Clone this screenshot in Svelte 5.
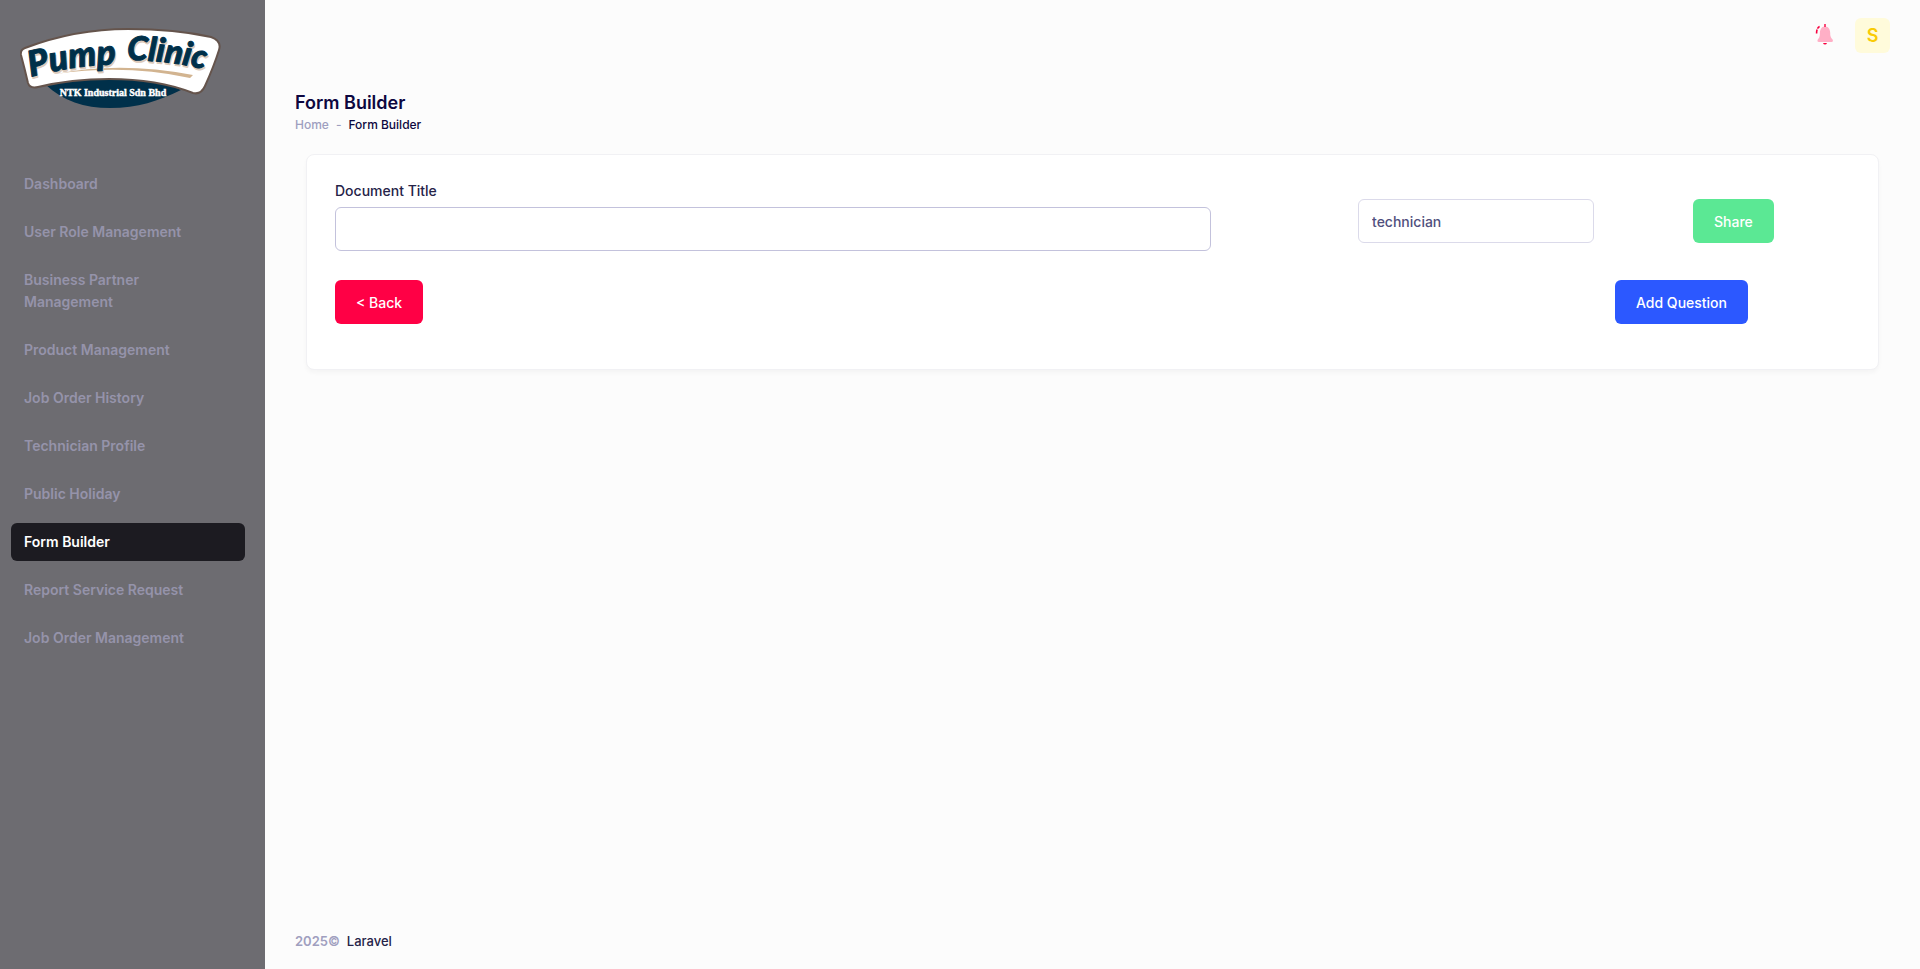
<script>
  let documentTitle = $state('');
  let role = $state('technician');

  const menu = [
    'Dashboard',
    'User Role Management',
    'Business Partner Management',
    'Product Management',
    'Job Order History',
    'Technician Profile',
    'Public Holiday',
    'Form Builder',
    'Report Service Request',
    'Job Order Management'
  ];
  const active = 'Form Builder';
</script>

<div class="app">
  <aside class="sidebar">
    <a class="logo" href="/" aria-label="Pump Clinic">
      <svg width="201" height="82" viewBox="20 27 201 82">
        <defs>
          <path id="word-one" d="M31 77 Q73 65 124 64" />
          <path id="word-two" d="M127 60 Q168 60 212 71" />
        </defs>
        <path d="M46 85 C63 101 84 108 110 108 C138 108 158 101 181 90 L150 77 L80 77 Z" fill="#00304a" />
        <path
          d="M25 48 Q75 29 128 29 Q175 29 211 37 Q222 41 219 50 Q214 66 205 86 Q201 95 193 93 C165 82 137 79 109 79 C82 79 59 82 38 87 Q30 89 28 83 Q25 70 21 55 Q20 50 25 48 Z"
          fill="#fff" stroke="#65544c" stroke-width="2" />
        <path d="M56 74 Q120 61 193 75 L190 78 Q125 64 56 74 Z" fill="#d2b490" />
        <g class="script shade">
          <text transform="translate(1 2)"><textPath href="#word-one">Pump</textPath></text>
          <text class="second" transform="translate(1 2)"><textPath href="#word-two">Clinic</textPath></text>
        </g>
        <g class="script">
          <text><textPath href="#word-one">Pump</textPath></text>
          <text class="second"><textPath href="#word-two">Clinic</textPath></text>
        </g>
        <text class="company" x="113" y="96" text-anchor="middle">NTK Industrial Sdn Bhd</text>
      </svg>
    </a>

    <nav>
      {#each menu as item}
        <a href="#{item}" class:active={item === active}>{item}</a>
      {/each}
    </nav>
  </aside>

  <div class="wrapper">
    <header>
      <button class="bell" aria-label="Notifications">
        <svg width="20" height="22" viewBox="0 0 20 22">
          <path d="M10 2.5 C14 2.5 15.2 6 15.2 9 C15.2 13 16.2 13.8 17.4 15.2 C18.4 16.6 18 18 16.5 18 H4 C2.3 18 2 16.6 3 15.2 C4.2 13.8 4.9 13 4.9 9 C4.9 6 6.2 2.5 10 2.5 Z" fill="#ffafc6" />
          <path d="M10 0 V3" stroke="#f8003f" stroke-width="1.4" />
          <path d="M8 19 H12 Q11.4 20.5 10 20.5 Q8.6 20.5 8 19 Z" fill="#f8003f" />
          <path d="M1.6 9.5 Q1.4 4 4.6 2.6" fill="none" stroke="#f8003f" stroke-width="1.6" stroke-dasharray="4 1 4" />
        </svg>
      </button>
      <button class="avatar">S</button>
    </header>

    <main>
      <h1>Form Builder</h1>
      <div class="breadcrumb">
        <a href="/">Home</a>
        <span class="dash">-</span>
        <span>Form Builder</span>
      </div>

      <form class="card">
        <div class="row">
          <div class="field">
            <label for="title">Document Title</label>
            <input id="title" type="text" bind:value={documentTitle} />
          </div>
          <div class="role">
            <select aria-label="Role" bind:value={role}>
              <option value="technician">technician</option>
            </select>
          </div>
          <div class="share">
            <button type="button" class="btn success">Share</button>
          </div>
        </div>
        <div class="actions">
          <button type="button" class="btn danger">&lt; Back</button>
          <button type="button" class="btn primary">Add Question</button>
        </div>
      </form>
    </main>

    <footer>
      <span>2025©</span>
      <a href="/laravel">Laravel</a>
    </footer>
  </div>
</div>

<style>
  :global(body) {
    margin: 0;
    background: #fcfcfc;
    font-family: 'Inter', 'Liberation Sans', sans-serif;
    font-size: 13px;
  }

  * {
    box-sizing: border-box;
  }

  a {
    text-decoration: none;
  }

  button,
  input,
  select {
    font-family: inherit;
  }

  .app {
    display: flex;
    min-height: 100vh;
  }

  /* Sidebar */
  .sidebar {
    flex: 0 0 265px;
    background: #6d6c71;
  }

  .logo {
    display: block;
    padding: 27px 20px 0;
  }

  .logo svg {
    display: block;
  }

  .script {
    font-family: 'Lato', sans-serif;
    font-size: 35px;
    font-weight: 900;
    font-style: italic;
    fill: #00304a;
    stroke: #00304a;
    stroke-width: 1px;
    stroke-linejoin: round;
  }

  .second {
    font-size: 33px;
  }

  .shade {
    fill: #dccabb;
    stroke: #dccabb;
  }

  .company {
    font-family: 'Liberation Serif', serif;
    font-size: 10px;
    font-weight: bold;
    fill: #fff;
    stroke: #fff;
    stroke-width: 0.4;
  }

  nav {
    display: flex;
    flex-direction: column;
    gap: 10px;
    padding: 56px 20px 20px 11px;
  }

  nav a {
    padding: 8px 40px 8px 13px;
    border-radius: 6px;
    color: #9593aa;
    font-size: 14px;
    font-weight: 600;
    line-height: 22px;
  }

  nav a.active {
    background: #1c1b21;
    color: #fff;
  }

  /* Page */
  .wrapper {
    flex: 1;
    display: flex;
    flex-direction: column;
    min-width: 0;
  }

  header {
    display: flex;
    justify-content: flex-end;
    align-items: center;
    gap: 20px;
    height: 70px;
    padding: 0 30px;
  }

  .bell {
    padding: 0;
    border: 0;
    background: none;
  }

  .bell svg {
    display: block;
  }

  .avatar {
    width: 35px;
    height: 35px;
    padding: 0;
    border: 0;
    border-radius: 6px;
    background: #fffbdb;
    color: #f9cb07;
    font-size: 18px;
    font-weight: 600;
  }

  main {
    flex: 1;
    padding: 22px 30px;
  }

  h1 {
    margin: 0;
    color: #0d0740;
    font-size: 18px;
    font-weight: 600;
    line-height: 22px;
  }

  .breadcrumb {
    display: flex;
    gap: 7px;
    color: #0d0740;
    font-size: 12px;
    font-weight: 500;
    line-height: 21px;
  }

  .breadcrumb a,
  .breadcrumb .dash {
    color: #9e9fc0;
  }

  .card {
    margin: 19px 11px 0;
    padding: 26px 28px 45px;
    border: 1px solid #f1f1f4;
    border-radius: 8px;
    background: #fff;
    box-shadow: 0 3px 4px rgba(0, 0, 0, 0.03);
  }

  .row {
    display: grid;
    grid-template-columns: 876fr 383fr 256fr;
  }

  .field label {
    display: block;
    margin-bottom: 6px;
    color: #252348;
    font-size: 14px;
    font-weight: 500;
    line-height: 20px;
  }

  .role {
    padding: 18px 0 0 147px;
  }

  .share {
    padding: 18px 0 0 99px;
  }

  input,
  select {
    display: block;
    width: 100%;
    height: 44px;
    padding: 0 13px;
    border: 1px solid #dbdaea;
    border-radius: 6px;
    background: #fff;
    color: #504f7d;
    font-size: 14px;
    font-weight: 500;
    appearance: none;
  }

  input {
    border-color: #c3c2dc;
  }

  .actions {
    display: flex;
    justify-content: space-between;
    margin-top: 29px;
    padding-right: 102px;
  }

  .btn {
    height: 44px;
    padding: 0 21px;
    border: 0;
    border-radius: 6px;
    color: #fff;
    font-size: 14px;
    font-weight: 500;
  }

  .success {
    background: #5be894;
  }

  .danger {
    background: #ff0045;
  }

  .primary {
    background: #2c58ff;
  }

  footer {
    display: flex;
    gap: 7px;
    padding: 17px 30px 18px;
    font-weight: 500;
    line-height: 20px;
  }

  footer span {
    color: #a09fbf;
    font-weight: 600;
  }

  footer a {
    color: #252348;
  }
</style>
